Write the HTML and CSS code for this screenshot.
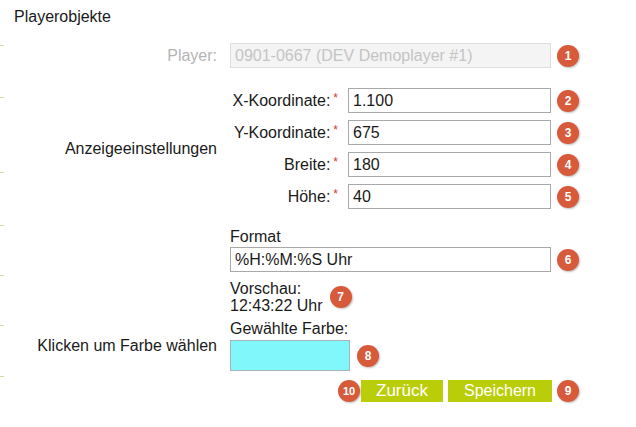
FILE: index.html
```html
<!DOCTYPE html>
<html lang="de">
<head>
<meta charset="utf-8">
<title>Playerobjekte</title>
<link rel="stylesheet" href="styles.css">
</head>
<body>
<div class="page">
  <div class="title">Playerobjekte</div>
  <div class="form">
    <div class="label muted row-player">Player:</div>
    <div class="field row-player">
      <input class="input wide" type="text" value="0901-0667 (DEV Demoplayer #1)" disabled>
      <span class="badge">1</span>
    </div>

    <div class="label center row-anz">Anzeigeeinstellungen</div>
    <div class="sub row-anz">
      <div class="sublabel">X-Koordinate:<span class="req">*</span></div>
      <div class="field"><input class="input narrow" type="text" value="1.100"><span class="badge">2</span></div>
      <div class="sublabel">Y-Koordinate:<span class="req">*</span></div>
      <div class="field"><input class="input narrow" type="text" value="675"><span class="badge">3</span></div>
      <div class="sublabel">Breite:<span class="req">*</span></div>
      <div class="field"><input class="input narrow" type="text" value="180"><span class="badge">4</span></div>
      <div class="sublabel">Höhe:<span class="req">*</span></div>
      <div class="field"><input class="input narrow" type="text" value="40"><span class="badge">5</span></div>
    </div>

    <div class="label row-format"></div>
    <div class="stack row-format">
      <div class="caption">Format</div>
      <div class="field"><input class="input wide" type="text" value="%H:%M:%S Uhr"><span class="badge">6</span></div>
    </div>

    <div class="label row-preview"></div>
    <div class="preview row-preview">
      <div class="preview-text">Vorschau:<br>12:43:22 Uhr</div>
      <span class="badge">7</span>
    </div>

    <div class="label center row-color">Klicken um Farbe wählen</div>
    <div class="stack row-color">
      <div class="caption">Gewählte Farbe:</div>
      <div class="field"><div class="swatch"></div><span class="badge b8">8</span></div>
    </div>

    <div class="label row-buttons"></div>
    <div class="buttons row-buttons">
      <span class="badge b10">10</span>
      <button class="btn btn-back" type="button">Zurück</button>
      <button class="btn btn-save" type="button">Speichern</button>
      <span class="badge">9</span>
    </div>
  </div>
</div>
</body>
</html>
```

FILE: styles.css
```css
html, body {
  margin: 0;
  padding: 0;
  background: #ffffff;
}

body {
  font-family: "Liberation Sans", Arial, sans-serif;
  font-size: 16px;
  color: #1a1a1a;
}

.page {
  width: 636px;
  height: 427px;
  overflow: hidden;
  background-image:
    linear-gradient(#d9d9a8, #d9d9a8),
    linear-gradient(#d9d9a8, #d9d9a8),
    linear-gradient(#d9d9a8, #d9d9a8),
    linear-gradient(#d9d9a8, #d9d9a8),
    linear-gradient(#d9d9a8, #d9d9a8),
    linear-gradient(#d9d9a8, #d9d9a8),
    linear-gradient(#d9d9a8, #d9d9a8);
  background-size: 4px 1px;
  background-repeat: no-repeat;
  background-position: 0 45px, 0 97px, 0 172px, 0 225px, 0 275px, 0 325px, 0 376px;
}

.title {
  padding: 8px 0 0 14px;
  line-height: 18px;
  color: #1a1a1a;
}

.form {
  display: grid;
  grid-template-columns: 217px 1fr;
  column-gap: 13px;
  margin-top: 17px;
}

.label {
  text-align: right;
  line-height: 25px;
  white-space: nowrap;
}

.label.center {
  align-self: center;
  line-height: 18px;
}

.muted {
  color: #b4b4b4;
}

.row-anz { margin-top: 20px; }
.row-format { margin-top: 19px; }
.row-preview { margin-top: 8px; }
.row-color { margin-top: 6px; }
.row-buttons { margin-top: 9px; }

.field {
  display: flex;
  align-items: center;
  gap: 6px;
  height: 25px;
}

.input {
  box-sizing: border-box;
  height: 25px;
  border: 1px solid #a9a9a9;
  padding: 0 4px;
  margin: 0;
  font-family: "Liberation Sans", Arial, sans-serif;
  font-size: 16px;
  color: #1a1a1a;
  background: #ffffff;
  outline: none;
  border-radius: 0;
}

.input:disabled {
  background: #f4f4f4;
  border-color: #dddddd;
  color: #c4c4c4;
}

.wide { width: 321px; }
.narrow { width: 203px; }

.sub {
  display: grid;
  grid-template-columns: 108px auto;
  grid-auto-rows: 25px;
  column-gap: 10px;
  row-gap: 7px;
}

.sublabel {
  text-align: right;
  height: 25px;
  line-height: 25px;
  white-space: nowrap;
}

.req {
  color: #cc3b3b;
  font-size: 12px;
  line-height: 0;
  vertical-align: 4px;
  margin-left: 3px;
}

.stack {
  display: flex;
  flex-direction: column;
}

.caption {
  line-height: 18px;
  margin-bottom: 1px;
}

.row-color .caption {
  margin-bottom: 2px;
}

.row-color .field {
  height: 31px;
}

.preview {
  display: flex;
  align-items: center;
  gap: 7px;
}

.preview-text {
  line-height: 17px;
}

.swatch {
  box-sizing: border-box;
  width: 120px;
  height: 31px;
  background: #80f7fb;
  border: 1px solid #a9b4b6;
}

.badge {
  flex: none;
  display: inline-flex;
  align-items: center;
  justify-content: center;
  width: 22px;
  height: 22px;
  border-radius: 50%;
  background: #d75a3a;
  color: #ffffff;
  font-weight: bold;
  font-size: 12px;
  box-shadow: 1px 1px 2px rgba(0, 0, 0, 0.25);
}

.b8 { margin-left: 1px; }

.b10 { font-size: 11px; }

.buttons {
  display: flex;
  align-items: center;
  margin-left: 108px;
}

.btn {
  height: 22px;
  border: none;
  margin: 0;
  padding: 0;
  background: #bacd09;
  color: #ffffff;
  font-family: "Liberation Sans", Arial, sans-serif;
  font-size: 16px;
  line-height: 22px;
  cursor: pointer;
}

.btn-back {
  width: 82px;
  margin-left: 1px;
  font-size: 17px;
}

.btn-save {
  width: 104px;
  margin-left: 5px;
  margin-right: 5px;
}
```
